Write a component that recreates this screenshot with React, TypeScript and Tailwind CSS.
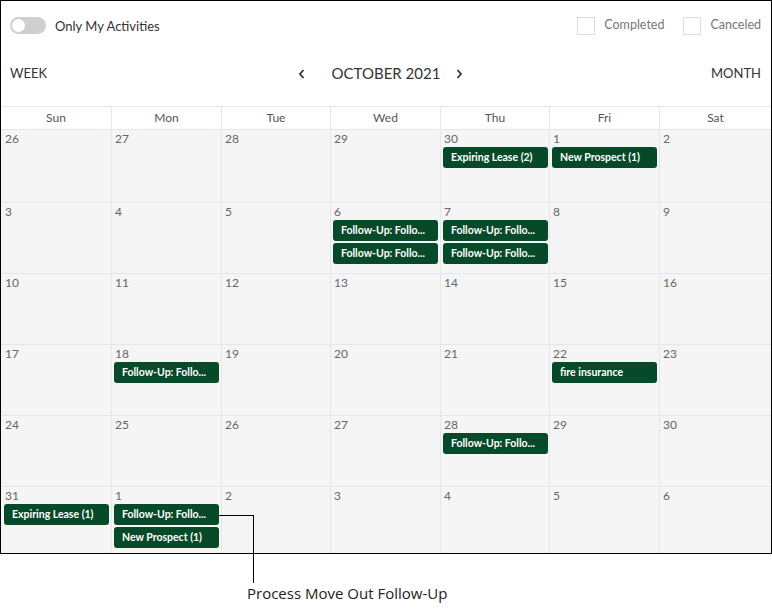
import React from "react";

type Ev = { label: string };

const days = ["Sun", "Mon", "Tue", "Wed", "Thu", "Fri", "Sat"];

const weeks: number[][] = [
  [26, 27, 28, 29, 30, 1, 2],
  [3, 4, 5, 6, 7, 8, 9],
  [10, 11, 12, 13, 14, 15, 16],
  [17, 18, 19, 20, 21, 22, 23],
  [24, 25, 26, 27, 28, 29, 30],
  [31, 1, 2, 3, 4, 5, 6],
];

const FU = "Follow-Up: Follo...";

// key = "week-col"
const events: Record<string, Ev[]> = {
  "0-4": [{ label: "Expiring Lease (2)" }],
  "0-5": [{ label: "New Prospect (1)" }],
  "1-3": [{ label: FU }, { label: FU }],
  "1-4": [{ label: FU }, { label: FU }],
  "3-1": [{ label: FU }],
  "3-5": [{ label: "fire insurance" }],
  "4-4": [{ label: FU }],
  "5-0": [{ label: "Expiring Lease (1)" }],
  "5-1": [{ label: FU }, { label: "New Prospect (1)" }],
};

function Chevron({ dir }: { dir: "left" | "right" }) {
  return (
    <svg width="8" height="12" viewBox="0 0 8 12" className="block">
      <path
        d={dir === "left" ? "M5.5 2 L2 6 L5.5 10" : "M2.5 2 L6 6 L2.5 10"}
        fill="none"
        stroke="#333"
        strokeWidth="1.8"
      />
    </svg>
  );
}

export default function App() {
  return (
    <div
      className="relative w-[772px] h-[609px] bg-white overflow-hidden"
      style={{ fontFamily: "Lato, 'Open Sans', sans-serif" }}
    >
      {/* calendar frame */}
      <div className="h-[554px] border border-black flex flex-col">
        {/* filters */}
        <div className="h-[48px] pt-[1px] flex items-center justify-between pl-[9px] pr-[10px]">
          <div className="flex items-center gap-[9px]">
            <div className="w-[36px] h-[17px] rounded-full bg-[#cfcfcf] flex items-center pl-[2px]">
              <div className="w-[13px] h-[13px] rounded-full bg-white" />
            </div>
            <span className="text-[13px] text-[#333] mt-[2px]">Only My Activities</span>
          </div>
          <div className="flex items-center">
            <div className="w-[18px] h-[18px] border border-[#dcdcdc] bg-white" />
            <span className="ml-[9px] text-[12.5px] text-[#777]">Completed</span>
            <div className="ml-[19px] w-[18px] h-[18px] border border-[#dcdcdc] bg-white" />
            <span className="ml-[9px] text-[12.5px] text-[#777]">Canceled</span>
          </div>
        </div>

        {/* view switch + month */}
        <div className="h-[49px] flex items-center justify-between pl-[9px] pr-[10px]">
          <span className="text-[13px] text-[#333] w-[80px]">WEEK</span>
          <div className="flex items-center mr-[10px]">
            <Chevron dir="left" />
            <span className="ml-[26px] mr-[15px] text-[15px] text-[#333]">OCTOBER 2021</span>
            <Chevron dir="right" />
          </div>
          <span className="text-[13px] text-[#333] w-[80px] text-right">MONTH</span>
        </div>

        <div className="h-[8px]" />

        {/* grid */}
        <div className="flex-1 flex flex-col border-t border-[#e2e7ee]">
          <div className="grid grid-cols-[111px_110px_109px_110px_109px_110px_1fr] h-[23px] bg-white border-b border-[#e2e7ee]">
            {days.map((d, i) => (
              <div
                key={d}
                className={`flex items-center justify-center text-[12px] text-[#555] ${
                  i < 6 ? "border-r border-[#e2e7ee]" : ""
                }`}
              >
                {d}
              </div>
            ))}
          </div>
          <div className="flex-1 grid grid-rows-[73px_71px_71px_71px_71px_1fr] bg-[#f5f5f5]">
            {weeks.map((w, wi) => (
              <div
                key={wi}
                className={`grid grid-cols-[111px_110px_109px_110px_109px_110px_1fr] ${
                  wi < 5 ? "border-b border-[#e2e7ee]" : ""
                }`}
              >
                {w.map((n, ci) => (
                  <div
                    key={ci}
                    className={`pt-[1px] ${ci === 0 ? "pl-[1px]" : ""} ${
                      ci < 6 ? "border-r border-[#e2e7ee]" : ""
                    }`}
                  >
                    <div className="pl-[3px] text-[12px] leading-[15px] text-[#666]">{n}</div>
                    <div className="mt-[1px] flex flex-col gap-[2px]">
                      {(events[`${wi}-${ci}`] || []).map((e, k) => (
                        <div
                          key={k}
                          className="ml-[2px] w-[105px] h-[21px] rounded-[3px] bg-[#074a29] text-white text-[10.5px] font-bold flex items-center pl-[8px] whitespace-nowrap overflow-hidden"
                        >
                          {e.label}
                        </div>
                      ))}
                    </div>
                  </div>
                ))}
              </div>
            ))}
          </div>
        </div>
      </div>

      {/* callout */}
      <div className="absolute left-[219px] top-[515px] w-[35px] border-t border-black" />
      <div className="absolute left-[253px] top-[515px] h-[68px] border-l border-black" />
      <div
        className="absolute left-[247px] top-[583px] text-[15px] leading-[20px] text-[#222]"
        style={{ fontFamily: "'Open Sans', sans-serif" }}
      >
        Process Move Out Follow-Up
      </div>
    </div>
  );
}
